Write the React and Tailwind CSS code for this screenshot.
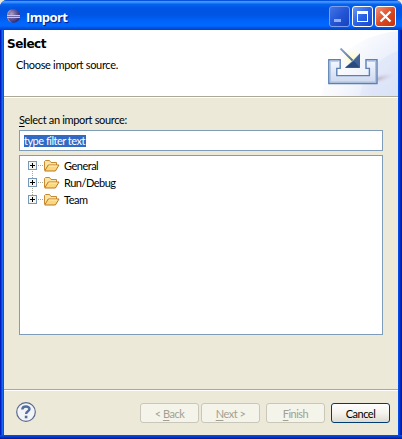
import React from "react";

function EclipseLogo() {
  return (
    <svg width="16" height="16" viewBox="0 0 16 16" className="block">
      <defs>
        <radialGradient id="orb" cx="35%" cy="35%" r="70%">
          <stop offset="0" stopColor="#a9a0c4" />
          <stop offset="0.5" stopColor="#645b9a" />
          <stop offset="1" stopColor="#30286f" />
        </radialGradient>
      </defs>
      <circle cx="7.5" cy="8" r="6.7" fill="url(#orb)" />
      <path d="M1.5 4.5Q3 1.5 6 1.3Q2 4 2 8T6 14.7Q1 13.5 1 8Z" fill="#c5a5b4" opacity="0.7" />
      <path d="M1 7.5H14" stroke="#c3c5ea" />
      <path d="M1 8.5H14" stroke="#6d68a8" />
      <path d="M1 9.5H14" stroke="#c3c5ea" />
    </svg>
  );
}

function CaptionButton({ kind }) {
  const close = kind === "close";
  const min = kind === "min";
  const box = close
    ? "border-white bg-linear-to-br from-[#ef9275] via-[#dc4a24] to-[#c53309]"
    : min
      ? "border-[#7f9fec] bg-linear-to-br from-[#4275e6] via-[#2455d6] to-[#1742be]"
      : "border-white bg-linear-to-br from-[#6d98f5] via-[#2862e5] to-[#1649cf]";
  return (
    <div className={`h-[21px] w-[21px] rounded-[3px] border ${box}`}>
      <svg width="19" height="19" viewBox="0 0 19 19" className="block">
        {min && <path d="M4 12H11V15H4Z" fill="#92aef0" />}
        {kind === "max" && (
          <path fillRule="evenodd" d="M4 4H15V15H4ZM5 7V14H14V7Z" fill="#fff" />
        )}
        {close && <path d="M4.5 4.5L14.5 14.5M14.5 4.5L4.5 14.5" stroke="#fff" strokeWidth="2.2" />}
      </svg>
    </div>
  );
}

function ImportBanner() {
  return (
    <svg width="98" height="66" viewBox="300 30 98 66" className="block shrink-0">
      <defs>
        <linearGradient id="haze" x1="0" y1="0" x2="1" y2="1">
          <stop offset="0.2" stopColor="#fff" />
          <stop offset="1" stopColor="#dbe3f8" />
        </linearGradient>
        <linearGradient id="fade" x1="0" x2="1">
          <stop offset="0" stopColor="#fff" />
          <stop offset="0.75" stopColor="#fff" stopOpacity="0" />
        </linearGradient>
        <linearGradient id="tray" x1="0" y1="0" x2="0" y2="1">
          <stop offset="0" stopColor="#f5f8ff" />
          <stop offset="1" stopColor="#ccd8ee" />
        </linearGradient>
        <linearGradient id="shaft" gradientUnits="userSpaceOnUse" x1="340" y1="48" x2="354" y2="62">
          <stop offset="0" stopColor="#8fa9cc" />
          <stop offset="1" stopColor="#45699f" />
        </linearGradient>
        <radialGradient id="glow">
          <stop offset="0.3" stopColor="#fcfbd3" />
          <stop offset="1" stopColor="#fdfce4" stopOpacity="0" />
        </radialGradient>
        <radialGradient id="shade">
          <stop offset="0" stopColor="#9c91a8" stopOpacity="0.55" />
          <stop offset="1" stopColor="#d9cbd8" stopOpacity="0" />
        </radialGradient>
      </defs>
      <rect x="300" y="30" width="98" height="66" fill="#fff" />
      <path d="M322 96C325 64 354 35 398 31V96Z" fill="url(#haze)" />
      <path d="M360 96C363 74 378 58 398 51V96Z" fill="#d8e1f7" opacity="0.45" />
      <rect x="300" y="30" width="98" height="66" fill="url(#fade)" />
      <ellipse cx="378" cy="79" rx="17" ry="4.5" fill="url(#shade)" transform="rotate(-15 378 79)" />
      <circle cx="352" cy="59" r="10" fill="url(#glow)" />
      <path
        d="M328.8 59.8H340.2V68.4H336.8V75.6H369.4V68.4H366V59.8H377V83.5H328.8Z"
        fill="url(#tray)"
        stroke="#5a80b4"
        strokeWidth="1.4"
      />
      <path d="M330.3 82V61.3H338.7" fill="none" stroke="#a7bddd" strokeWidth="0.9" />
      <path d="M330.3 82H375.5V61.3H367.5" fill="none" stroke="#a7bddd" strokeWidth="0.9" />
      <path d="M340.5 48.5L353 61" stroke="url(#shaft)" strokeWidth="2" />
      <path d="M345 67.7L360 53.3L353.5 61.5Z" fill="#9fb7d6" />
      <path d="M345 67.7L353.5 60.5L360 53.3V67.7Z" fill="#3f6398" />
      <path d="M345 67.7L354 61L360 67.7Z" fill="#294a7d" />
    </svg>
  );
}

function TreeRow({ label, first, last }) {
  return (
    <div className="flex h-[17px] items-center pl-2">
      <svg width="32" height="17" viewBox="0 0 32 17" className="block shrink-0" shapeRendering="crispEdges">
        <path d="M10 8.5H15" stroke="#aca899" strokeDasharray="1 1" />
        {!last && <path d="M4.5 14V17" stroke="#aca899" strokeDasharray="1 1" />}
        {!first && <path d="M4.5 1V4" stroke="#aca899" strokeDasharray="1 1" />}
        <rect x="0.5" y="4.5" width="8" height="8" fill="#f5f4ee" stroke="#7898b5" />
        <path d="M2 8.5H7M4.5 6V11" stroke="#000" />
        <g shapeRendering="auto">
          <path d="M16.5 13V4.5L17.5 3.5H21.5L23 5.5H28.5V8" fill="#fbe5a6" stroke="#c8892f" />
          <path d="M16.7 14L20.2 8H31L27.4 14Z" fill="#fbd77e" stroke="#bd7921" />
          <path d="M20.8 9H29.4" stroke="#fff0bd" />
        </g>
      </svg>
      <span className="ml-1 tracking-[-0.5px] whitespace-nowrap">{label}</span>
    </div>
  );
}

function Button({ children, enabled }) {
  return (
    <div
      className={`flex h-5 w-[59px] items-center justify-center rounded-[3px] border tracking-[-0.5px] whitespace-pre ${
        enabled
          ? "border-[#003c74] bg-linear-to-b from-white via-[#f4f3ee] to-[#dedbd0] text-black"
          : "border-[#c9c7ba] bg-[#f5f4ea] text-[#a1a192]"
      }`}
    >
      <span>{children}</span>
    </div>
  );
}

function Key({ children }) {
  return <span className="underline decoration-1 underline-offset-2">{children}</span>;
}

export default function App() {
  return (
    <div className="h-[439px] w-[402px] overflow-hidden bg-[#ece9d8] font-['Lato',sans-serif] text-[11px] leading-[13px] text-black">
      <div className="flex h-full flex-col rounded-t-[7px] bg-[linear-gradient(90deg,#001dbe_0_1px,#0a47e2_1px_2px,#1667f2_2px_3px,#0651e5_3px_4px,#0651e5_398px,#0045e8_399px,#0030c5_400px,#00138c_402px)]">
        <div className="flex h-[30px] shrink-0 items-start rounded-t-[7px] bg-[linear-gradient(180deg,#0753da_0_1px,#3d95ff_1px_2px,#2784ff_3px,#0564ee_4px,#0054e3_8px,#0055e5_15px,#0065fd_22px,#0068ff_26px,#005cec_27px,#003fcc_30px)]">
          <div className="mt-2 ml-1.5 w-5">
            <EclipseLogo />
          </div>
          <div className="mt-[9px] font-['Open_Sans',sans-serif] text-[13px] leading-4 font-bold tracking-[-0.6px] text-white [text-shadow:1px_1px_1px_#0a1883]">
            Import
          </div>
          <div className="mt-[6px] mr-[6px] ml-auto flex gap-[2px]">
            <CaptionButton kind="min" />
            <CaptionButton kind="max" />
            <CaptionButton kind="close" />
          </div>
        </div>
        <div className="mx-1 flex h-[405px] flex-col bg-[#ece9d8]">
          <div className="flex h-[67px] shrink-0 justify-between border-b border-[#aca899] bg-white">
            <div className="whitespace-nowrap">
              <div className="mt-[6px] ml-[3px] font-['DejaVu_Sans',sans-serif] text-[12px] leading-4 font-bold tracking-[-0.5px]">
                Select
              </div>
              <div className="mt-[6px] ml-3 tracking-[-0.32px]">Choose import source.</div>
            </div>
            <ImportBanner />
          </div>
          <div className="h-px shrink-0 bg-white" />
          <div className="flex flex-1 flex-col px-[15px] pt-[15px]">
            <div className="tracking-[-0.34px]">
              <Key>S</Key>elect an import source:
            </div>
            <div className="mt-1 flex h-[21px] w-[364px] items-center border border-[#7f9db9] bg-white pl-1">
              <span className="h-3 w-[62px] bg-[#316ac5] leading-3 tracking-[-0.5px] whitespace-nowrap text-white">
                type filter text
              </span>
            </div>
            <div className="mt-1 h-[180px] w-[364px] border border-[#7f9db9] bg-white pt-px">
              <TreeRow label="General" first />
              <TreeRow label="Run/Debug" />
              <TreeRow label="Team" last />
            </div>
          </div>
          <div className="flex h-[46px] shrink-0 items-start border-t border-[#aca899]">
            <div className="flex h-full w-full items-start border-t border-white pr-2 pl-3">
              <svg width="20" height="20" viewBox="0 0 20 20" className="mt-[11px] block">
                <circle cx="10" cy="10" r="9.3" fill="#f3f4f8" stroke="#596b8e" strokeWidth="1.2" />
                <path d="M6.3 7.5C6.3 3.5 13.8 3.6 13.5 7.2C13.3 9.4 10.1 9.3 10.1 12" fill="none" stroke="#526e9d" strokeWidth="2.4" />
                <rect x="8.8" y="13.7" width="2.6" height="2.6" fill="#526e9d" />
              </svg>
              <div className="mt-3 ml-auto flex">
                <Button>{"< "}<Key>B</Key>ack</Button>
                <div className="ml-0.5"><Button><Key>N</Key>{"ext >"}</Button></div>
                <div className="ml-1.5"><Button><Key>F</Key>inish</Button></div>
                <div className="ml-1.5"><Button enabled>Cancel</Button></div>
              </div>
            </div>
          </div>
        </div>
        <div className="h-1 shrink-0 bg-linear-to-b from-[#0655e8] via-[#0039cf] to-[#00138c]" />
      </div>
    </div>
  );
}
